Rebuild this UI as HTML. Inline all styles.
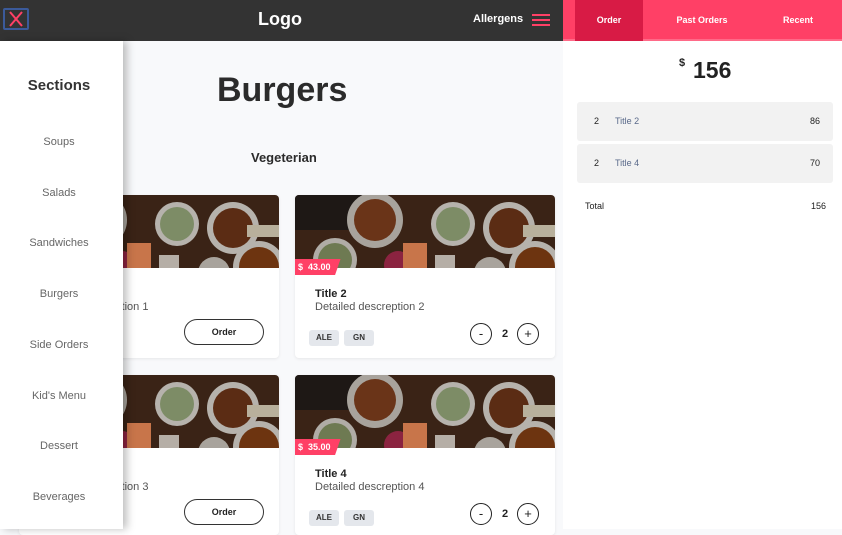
<!DOCTYPE html>
<html><head><meta charset="utf-8"><style>
*{box-sizing:border-box;margin:0;padding:0}
body{width:842px;height:529px;overflow:hidden;font-family:"Liberation Sans",sans-serif;background:#f8f9fb;position:relative;color:#222}
.hdr{position:absolute;left:0;top:0;width:563px;height:41px;background:#333}
.x{position:absolute;left:3px;top:8px;width:26px;height:22px;border:2px solid #3b5a9a;border-radius:2px}
.logo{position:absolute;left:258px;top:9px;color:#fff;font-weight:bold;font-size:18px}
.all{position:absolute;left:473px;top:13px;color:#fff;font-weight:bold;font-size:11px}
.hb{position:absolute;left:532px;top:14px;width:18px}
.hb i{display:block;height:2px;background:#ff4066;margin-bottom:3px}
.right{position:absolute;left:563px;top:0;width:279px;height:529px;background:#fff}
.tabs{height:41px;background:#ff4066;position:relative;border-bottom:2px solid #ff6a88}
.tab{position:absolute;top:0;height:41px;line-height:40px;color:#fff;font-weight:bold;font-size:9px;text-align:center}
.side{position:absolute;left:0;top:41px;width:123px;height:488px;background:#fff;box-shadow:4px 0 8px rgba(0,0,0,.25);z-index:5}
.side div{position:absolute;left:0;width:118px;text-align:center;font-size:11px;color:#666}
.card{position:absolute;background:#fff;border-radius:4px;box-shadow:0 1px 3px rgba(0,0,0,.08);overflow:hidden}
.card svg{display:block}
.price{position:absolute;left:0;top:64px;background:#ff4066;color:#fff;font-size:9px;font-weight:bold;padding:3px 10px 3px 3px;clip-path:polygon(0 0,100% 0,88% 100%,0 100%)}
.t{position:absolute;font-weight:bold;font-size:11px;color:#222}
.d{position:absolute;font-size:11px;color:#555}
.tag{position:absolute;background:#e4e7ec;border-radius:3px;font-size:8px;font-weight:bold;color:#333;width:30px;height:16px;line-height:16px;text-align:center}
.cb{position:absolute;width:22px;height:22px;border:1px solid #222;border-radius:50%;text-align:center;line-height:20px;font-size:13px}
.ob{position:absolute;width:80px;height:26px;border:1px solid #333;border-radius:13px;text-align:center;line-height:24px;font-size:9px;font-weight:bold}
.row{position:absolute;left:14px;width:256px;height:39px;background:#f2f2f2;border-radius:3px;font-size:9px}
.row span{position:absolute;top:14px}
</style></head><body>
<svg width="0" height="0" style="position:absolute"><defs><g id="food">
<rect width="260" height="73" fill="#3a2316"/>
<rect x="0" y="0" width="90" height="35" fill="#1e1815"/>
<circle cx="80" cy="25" r="28" fill="#a8a39c"/><circle cx="80" cy="25" r="21" fill="#6a3418"/>
<circle cx="40" cy="65" r="22" fill="#b0aca6"/><circle cx="40" cy="65" r="17" fill="#6e7a52"/>
<circle cx="158" cy="29" r="22" fill="#b6b2ac"/><circle cx="158" cy="29" r="17" fill="#7d8c66"/>
<circle cx="214" cy="33" r="26" fill="#b6b2ac"/><circle cx="214" cy="33" r="20" fill="#5b2c14"/>
<circle cx="240" cy="72" r="26" fill="#b6b2ac"/><circle cx="240" cy="72" r="20" fill="#6d3410"/>
<circle cx="195" cy="78" r="16" fill="#a8a39c"/>
<circle cx="103" cy="70" r="14" fill="#8b2340"/>
<rect x="108" y="48" width="24" height="25" fill="#c8754a"/>
<rect x="140" y="60" width="20" height="13" fill="#b5aea6"/>
<rect x="228" y="30" width="32" height="12" fill="#b8b09c"/>
</g></defs></svg>

<div class="hdr">
<div class="x"><svg width="22" height="18" viewBox="0 0 22 18"><path d="M5 2L17 16M17 2L5 16" stroke="#ff4066" stroke-width="2"/></svg></div>
<div class="logo">Logo</div>
<div class="all">Allergens</div>
<div class="hb"><i></i><i></i><i></i></div>
</div>

<div style="position:absolute;left:217px;top:71px;font-size:34px;font-weight:bold;color:#2b2b2b">Burgers</div>
<div style="position:absolute;left:251px;top:150px;font-size:13px;font-weight:bold;color:#2b2b2b">Vegeterian</div>

<div class="card" style="left:19px;top:195px;width:260px;height:163px">
<svg width="260" height="73"><use href="#food"/></svg>
<div class="d" style="left:20px;top:106px">Detailed descreption 1</div>
<div class="ob" style="left:165px;top:124px">Order</div>
</div>
<div class="card" style="left:295px;top:195px;width:260px;height:163px">
<svg width="260" height="73"><use href="#food"/></svg>
<div class="price">$&nbsp; 43.00</div>
<div class="t" style="left:20px;top:93px">Title 2</div>
<div class="d" style="left:20px;top:106px">Detailed descreption 2</div>
<div class="tag" style="left:14px;top:135px">ALE</div>
<div class="tag" style="left:49px;top:135px">GN</div>
<div class="cb" style="left:175px;top:128px">-</div>
<div style="position:absolute;left:207px;top:133px;font-size:11px;font-weight:bold">2</div>
<div class="cb" style="left:222px;top:128px">+</div>
</div>
<div class="card" style="left:19px;top:375px;width:260px;height:160px">
<svg width="260" height="73"><use href="#food"/></svg>
<div class="d" style="left:20px;top:106px">Detailed descreption 3</div>
<div class="ob" style="left:165px;top:124px">Order</div>
</div>
<div class="card" style="left:295px;top:375px;width:260px;height:160px">
<svg width="260" height="73"><use href="#food"/></svg>
<div class="price">$&nbsp; 35.00</div>
<div class="t" style="left:20px;top:93px">Title 4</div>
<div class="d" style="left:20px;top:106px">Detailed descreption 4</div>
<div class="tag" style="left:14px;top:135px">ALE</div>
<div class="tag" style="left:49px;top:135px">GN</div>
<div class="cb" style="left:175px;top:128px">-</div>
<div style="position:absolute;left:207px;top:133px;font-size:11px;font-weight:bold">2</div>
<div class="cb" style="left:222px;top:128px">+</div>
</div>

<div class="side">
<div style="top:36px;font-size:15px;font-weight:bold;color:#333">Sections</div>
<div style="top:95px">Soups</div>
<div style="top:146px">Salads</div>
<div style="top:196px">Sandwiches</div>
<div style="top:247px">Burgers</div>
<div style="top:298px">Side Orders</div>
<div style="top:349px">Kid's Menu</div>
<div style="top:399px">Dessert</div>
<div style="top:450px">Beverages</div>
</div>

<div class="right">
<div class="tabs">
<div class="tab" style="left:12px;width:68px;background:#d81b45">Order</div>
<div class="tab" style="left:100px;width:78px">Past Orders</div>
<div class="tab" style="left:195px;width:80px">Recent</div>
</div>
<div style="position:absolute;left:116px;top:57px;font-size:11px;font-weight:bold">$</div>
<div style="position:absolute;left:130px;top:57px;font-size:23px;font-weight:bold;color:#222">156</div>
<div class="row" style="top:102px"><span style="left:17px">2</span><span style="left:38px;color:#5a6a8a">Title 2</span><span style="right:13px">86</span></div>
<div class="row" style="top:144px"><span style="left:17px">2</span><span style="left:38px;color:#5a6a8a">Title 4</span><span style="right:13px">70</span></div>
<div style="position:absolute;left:22px;top:201px;font-size:9px">Total</div>
<div style="position:absolute;right:16px;top:201px;font-size:9px">156</div>
</div>
</body></html>
